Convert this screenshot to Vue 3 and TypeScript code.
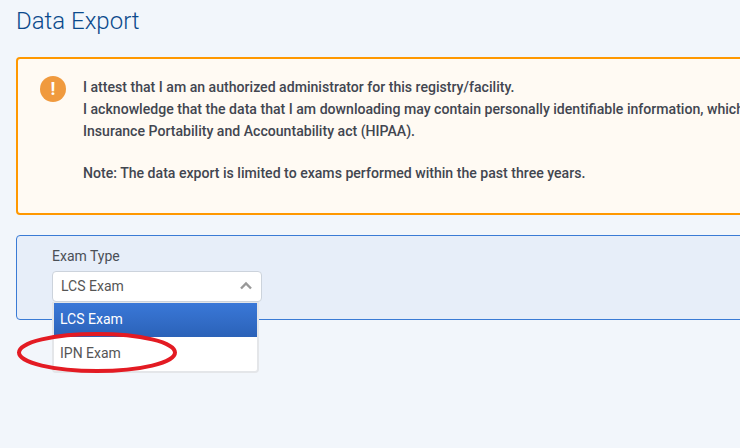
<template>
  <div class="page">
    <h1 class="page-title">Data Export</h1>

    <div class="alert">
      <span class="alert-icon">!</span>
      <div class="alert-text">
        <div>I attest that I am an authorized administrator for this registry/facility.</div>
        <div>I acknowledge that the data that I am downloading may contain personally identifiable information, which</div>
        <div>Insurance Portability and Accountability act (HIPAA).</div>
        <div class="note">Note: The data export is limited to exams performed within the past three years.</div>
      </div>
    </div>

    <div class="filter-panel">
      <label class="field-label">Exam Type</label>
      <div class="select-wrap">
        <div class="select-box">
          <span>{{ selected }}</span>
          <svg class="chevron" width="14" height="9" viewBox="0 0 14 9">
            <path d="M2 7.5 L7 2.5 L12 7.5" fill="none" stroke="#999" stroke-width="2.4" />
          </svg>
        </div>
        <ul class="dropdown">
          <li
            v-for="opt in options"
            :key="opt"
            class="option"
            :class="{ active: opt === selected }"
          >
            {{ opt }}
          </li>
        </ul>
      </div>
    </div>

    <svg class="annotation" width="168" height="48" viewBox="0 0 168 48">
      <ellipse cx="81" cy="23.5" rx="78" ry="18.5" fill="none" stroke="#e31b23" stroke-width="4" />
    </svg>
  </div>
</template>

<script setup lang="ts">
const options: string[] = ['LCS Exam', 'IPN Exam'];
const selected = 'LCS Exam';
</script>

<style>
html,
body {
  margin: 0;
  overflow: hidden;
  background: #f2f6fb;
}
</style>

<style scoped>
.page {
  position: relative;
  width: 740px;
  height: 448px;
  overflow: hidden;
  padding-left: 16px;
  box-sizing: border-box;
  font-family: Roboto, "Liberation Sans", sans-serif;
  background: #f2f6fb;
}

.page-title {
  margin: 0;
  padding-top: 6px;
  height: 57px;
  box-sizing: border-box;
  font-size: 24px;
  line-height: 31px;
  font-weight: 300;
  color: #0b4a8c;
}

.alert {
  display: flex;
  width: 800px;
  height: 158px;
  box-sizing: border-box;
  padding: 17px 0 0 22px;
  gap: 17px;
  border: 2px solid #ff9800;
  border-radius: 4px;
  background: #fffaf3;
}

.alert-icon {
  flex: none;
  width: 26px;
  height: 26px;
  border-radius: 50%;
  background: #f09a3e;
  color: #fff;
  font-size: 18px;
  font-weight: 700;
  line-height: 26px;
  text-align: center;
}

.alert-text {
  font-size: 14.1px;
  line-height: 22px;
  font-weight: 500;
  color: #424650;
  white-space: nowrap;
}

.note {
  margin-top: 20px;
}

.filter-panel {
  width: 800px;
  height: 85px;
  margin-top: 20px;
  box-sizing: border-box;
  padding: 11px 0 0 35px;
  border: 1px solid #3a7bd5;
  border-radius: 4px;
  background: #e7eef9;
}

.field-label {
  display: block;
  font-size: 14px;
  line-height: 18px;
  color: #4a4f57;
}

.select-wrap {
  position: relative;
  width: 210px;
  margin-top: 6px;
}

.select-box {
  display: flex;
  align-items: center;
  justify-content: space-between;
  height: 31px;
  box-sizing: border-box;
  padding: 0 8px 2px;
  border: 1px solid #ccd3dc;
  border-radius: 4px;
  background: #fff;
  font-size: 14px;
  color: #555;
}

.dropdown {
  position: absolute;
  top: 31px;
  left: 0;
  width: 207px;
  margin: 0;
  padding: 0;
  box-sizing: border-box;
  list-style: none;
  border: 2px solid #e4e6e9;
  border-top-width: 1px;
  border-radius: 0 0 4px 4px;
  background: #fff;
}

.option {
  height: 34px;
  padding-left: 6px;
  font-size: 14px;
  line-height: 33px;
  color: #555;
}

.option.active {
  background: linear-gradient(#3a78d8, #2b62b8);
  color: #fff;
}

.annotation {
  position: absolute;
  left: 16px;
  top: 329px;
}
</style>
